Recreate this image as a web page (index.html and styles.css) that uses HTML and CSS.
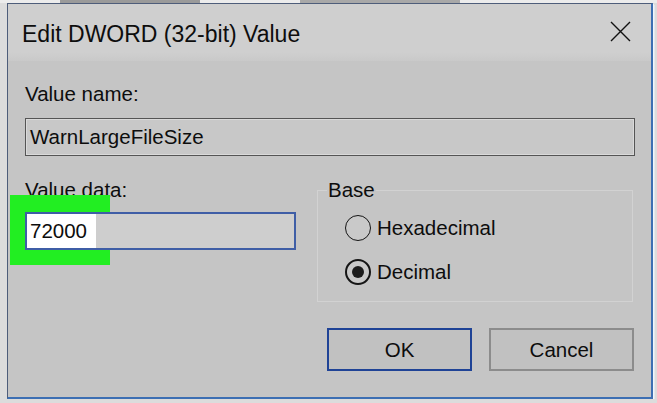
FILE: index.html
```html
<!DOCTYPE html>
<html lang="en">
<head>
    <meta charset="UTF-8">
    <meta name="viewport" content="width=device-width, initial-scale=1.0">
    <title>Edit DWORD (32-bit) Value</title>
    <link rel="stylesheet" href="styles.css">
</head>
<body>
    <div class="behind"></div>

    <div class="dialog">
        <div class="titlebar">
            <span class="title">Edit DWORD (32-bit) Value</span>
            <svg class="close" width="21" height="21" viewBox="0 0 21 21">
                <path d="M1 1 L20 20 M20 1 L1 20" stroke="#111" stroke-width="1.4" fill="none"/>
            </svg>
        </div>

        <div class="content">
            <div class="label">Value name:</div>
            <div class="field name-field">WarnLargeFileSize</div>

            <div class="row">
                <div class="data-col">
                    <div class="label">Value data:</div>
                    <div class="data-wrap">
                        <div class="highlight"></div>
                        <div class="field data-field">
                            <span class="selected">72000</span>
                        </div>
                    </div>
                </div>

                <fieldset class="base">
                    <legend>Base</legend>
                    <div class="radio">
                        <span class="circle"></span>
                        <span>Hexadecimal</span>
                    </div>
                    <div class="radio checked">
                        <span class="circle"></span>
                        <span>Decimal</span>
                    </div>
                </fieldset>
            </div>

            <div class="buttons">
                <button class="btn default">OK</button>
                <button class="btn">Cancel</button>
            </div>
        </div>
    </div>
</body>
</html>
```

FILE: styles.css
```css
* {
    box-sizing: border-box;
}
body {
    margin: 0;
    background: #dcdcdc;
    font-family: "Liberation Sans", Arial, sans-serif;
    color: #0d0d0d;
}
.behind {
    height: 3px;
    background: linear-gradient(90deg, #ececec 60px, #9a9a9a 60px, #9a9a9a 200px, #ececec 200px, #ececec 300px, #a8a8a8 300px, #a8a8a8 460px, #ececec 460px);
}
.dialog {
    width: 646px;
    height: 396px;
    margin-left: 7px;
    background: #c5c5c5;
    border-style: solid;
    border-width: 1px 2px 2px 1px;
    border-color: #4e5d7a #3d6fb3 #3d6fb3 #4e5d7a;
    box-shadow: 1px 1px 0 #f2f5fa, 2px 2px 0 #e6e9ee;
}
.titlebar {
    display: flex;
    align-items: center;
    justify-content: space-between;
    height: 57px;
    padding: 3px 20px 0 14px;
    background: linear-gradient(#cfcfcf 85%, #c9c9c9);
}
.title {
    font-size: 23px;
}
.close {
    margin-bottom: 5px;
}
.content {
    padding: 0 16px 0 17px;
}
.label {
    font-size: 20.5px;
    line-height: 24px;
}
.content > .label {
    margin-top: 21px;
}
.field {
    display: flex;
    align-items: center;
    height: 38px;
    font-size: 20.5px;
}
.name-field {
    margin-top: 12px;
    padding-left: 4px;
    background: #c8c8c8;
    border: 1px solid #555;
    box-shadow: inset 0 0 0 1px #dadada;
}
.row {
    display: flex;
    align-items: flex-start;
    gap: 21px;
    margin-top: 22px;
}
.data-col {
    width: 271px;
}
.data-wrap {
    position: relative;
    margin-top: 10px;
}
.highlight {
    position: absolute;
    left: -15px;
    top: -17px;
    width: 100px;
    height: 70px;
    background: #22ee22;
}
.data-field {
    position: relative;
    align-items: stretch;
    background: #cecece;
    border: 2px solid #3f5ea6;
}
.selected {
    display: flex;
    align-items: center;
    padding: 0 9px 0 3px;
    background: #fff;
}
.base {
    width: 316px;
    margin: 0;
    padding: 4px 0 7px 9px;
    border: 1px solid #d2d2d2;
}
.base legend {
    padding: 0 1px;
    font-size: 20.5px;
    line-height: 24px;
}
.radio {
    display: flex;
    align-items: center;
    gap: 6px;
    height: 44px;
    padding-left: 18px;
    font-size: 20.5px;
}
.circle {
    position: relative;
    width: 26px;
    height: 26px;
    border: 1.5px solid #151515;
    border-radius: 50%;
    background: #c9c9c9;
}
.checked .circle {
    border-width: 2px;
}
.checked .circle::after {
    content: "";
    position: absolute;
    top: 5px;
    left: 5px;
    width: 12px;
    height: 12px;
    border-radius: 50%;
    background: #1c1c1c;
}
.buttons {
    display: flex;
    justify-content: flex-end;
    gap: 17px;
    margin-top: 26px;
    padding-right: 1px;
}
.btn {
    width: 145px;
    height: 43px;
    padding: 0;
    font-family: inherit;
    font-size: 20.5px;
    color: #0d0d0d;
    background: #c1c1c1;
    border: 2px solid #8c8c8c;
}
.btn.default {
    border-color: #1f4396;
}
```
